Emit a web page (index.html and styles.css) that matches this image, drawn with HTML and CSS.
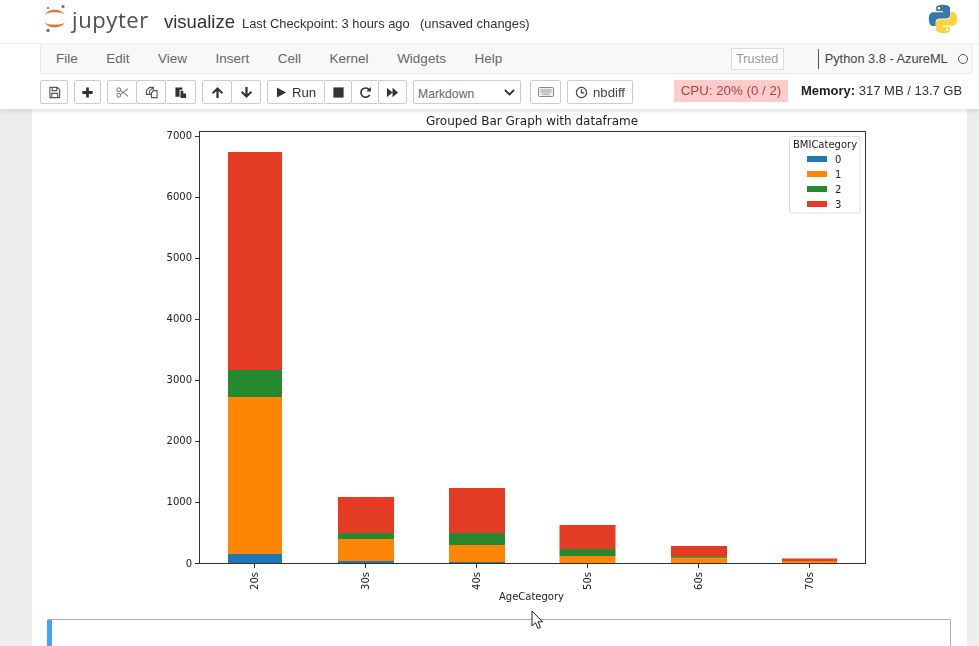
FILE: index.html
```html
<!DOCTYPE html>
<html lang="en">
<head>
<meta charset="utf-8">
<title>visualize</title>
<link rel="stylesheet" href="styles.css">
</head>
<body>
<header class="top">
  <div class="titlebar">
    <svg class="jlogo" width="24" height="30" viewBox="0 0 24 30">
      <path class="jorange" d="M2 11.500C5 5 18 5 22 11.500C18 8.500 5 8.500 2 11.500Z"/>
      <path class="jorange" d="M2 19.500C5 26 18 26 22 19.500C18 22.500 5 22.500 2 19.500Z"/>
      <circle class="jgrey" cx="20" cy="3.500" r="1.600"/>
      <circle class="jgrey" cx="5" cy="5" r="1.100"/>
      <circle class="jgrey" cx="5" cy="27.500" r="1.700"/>
    </svg>
    <span class="jname">jupyter</span>
    <span class="nbname">visualize</span>
    <span class="checkpoint">Last Checkpoint: 3 hours ago</span>
    <span class="unsaved">(unsaved changes)</span>
    <svg class="pylogo" width="30" height="30" viewBox="0 0 110 110">
      <path class="pyblue" d="M54 3C28 3 30 14 30 14V26H55V30H20C20 30 3 28 3 55C3 82 18 81 18 81H28V68C28 68 27 53 43 53H67C67 53 81 53 81 39V17C81 17 83 3 54 3ZM40 11A4.500 4.500 0 1 1 40 20A4.500 4.500 0 1 1 40 11Z"/>
      <path class="pyyellow" d="M56 107C82 107 80 96 80 96V84H55V80H90C90 80 107 82 107 55C107 28 92 29 92 29H82V42C82 42 83 57 67 57H43C43 57 29 57 29 71V93C29 93 27 107 56 107ZM70 99A4.500 4.500 0 1 1 70 90A4.500 4.500 0 1 1 70 99Z"/>
    </svg>
  </div>
  <nav class="menubar">
    <span class="menu m-file">File</span>
    <span class="menu">Edit</span>
    <span class="menu">View</span>
    <span class="menu">Insert</span>
    <span class="menu">Cell</span>
    <span class="menu">Kernel</span>
    <span class="menu">Widgets</span>
    <span class="menu">Help</span>
    <span class="trusted">Trusted</span>
    <span class="kernel">Python 3.8 - AzureML</span>
    <span class="kstatus"></span>
  </nav>
  <div class="toolbar">
    <div class="group"><button class="btn w28"><svg class="ico" viewBox="0 0 14 14"><path class="line" d="M2 1.500H10L12.500 4V12.500H2ZM4.500 1.500V5H9.500V1.500M4 12.500V8H10.500V12.500"/></svg></button></div>
    <div class="group"><button class="btn w27"><svg class="ico" viewBox="0 0 14 14"><path class="solid" d="M5.500 1.500H8.500V5.500H12.500V8.500H8.500V12.500H5.500V8.500H1.500V5.500H5.500Z"/></svg></button></div>
    <div class="group">
      <button class="btn w30"><svg class="ico" viewBox="0 0 14 14"><path class="faint" d="M5 5L13 11M5 9L13 3"/><circle class="faint" cx="3" cy="4" r="2"/><circle class="faint" cx="3" cy="10" r="2"/></svg></button>
      <button class="btn w30"><svg class="ico" viewBox="0 0 14 14"><path class="line" d="M5 1.500H9V5H13V12.500H7V9H1.500V5ZM9 1.500L5 5V9H7M9 5L7 7.500V9"/></svg></button>
      <button class="btn w31"><svg class="ico" viewBox="0 0 14 14"><path class="solid" d="M1.500 1.500H9V4H6V11.500H1.500Z"/><path class="solid" d="M7 5H10V8H13V13H7Z"/></svg></button>
    </div>
    <div class="group">
      <button class="btn w30"><svg class="ico" viewBox="0 0 14 14"><path class="solid" d="M7 1L13 7L11.500 8.500L8.200 5.300V13H5.800V5.300L2.500 8.500L1 7Z"/></svg></button>
      <button class="btn w30"><svg class="ico" viewBox="0 0 14 14"><path class="solid" d="M7 13L13 7L11.500 5.500L8.200 8.700V1H5.800V8.700L2.500 5.500L1 7Z"/></svg></button>
    </div>
    <div class="group">
      <button class="btn run"><svg class="ico small" viewBox="0 0 12 12"><path class="solid" d="M1 0.500L11 6L1 11.500Z"/></svg><span>Run</span></button>
      <button class="btn w28"><svg class="ico" viewBox="0 0 14 14"><rect class="solid" x="1.500" y="1.500" width="11" height="11"/></svg></button>
      <button class="btn w28"><svg class="ico" viewBox="0 0 14 14"><path class="arc" d="M11.500 9.500A5 5 0 1 1 11 4"/><path class="solid" d="M12.800 1.200V6H8Z"/></svg></button>
      <button class="btn w29"><svg class="ico" viewBox="0 0 14 14"><path class="solid" d="M1 2L7 7L1 12ZM7 2L13 7L7 12Z"/></svg></button>
    </div>
    <div class="select"><span>Markdown</span><svg class="chev" width="11" height="7" viewBox="0 0 11 7"><path class="chevline" d="M1 1L5.500 5.500L10 1"/></svg></div>
    <button class="btn kbd"><svg width="16" height="10" viewBox="0 0 16 10"><rect class="kbdrect" x="0.500" y="0.500" width="15" height="9" rx="1"/><path class="kbdkeys" d="M2.500 3H13.500M2.500 5H13.500M4.500 7.200H11.500"/></svg></button>
    <button class="btn nbdiff"><svg class="ico" viewBox="0 0 14 14"><circle class="arc" cx="7" cy="7" r="5.500"/><path class="arc" d="M7 3.500V7.500H10"/></svg><span>nbdiff</span></button>
    <div class="cpu">CPU: 20% (0 / 2)</div>
    <div class="memory"><b>Memory:</b> 317 MB / 13.7 GB</div>
  </div>
</header>
<main class="site">
  <div class="notebook">
    <svg class="chart" width="935" height="510" viewBox="32 109 935 510">
      <text class="title" x="532" y="125">Grouped Bar Graph with dataframe</text>
      <g class="red">
        <rect x="228" y="152" width="54" height="218"/><rect x="338" y="497" width="56" height="36"/><rect x="449" y="488" width="56" height="45"/><rect x="559.500" y="525" width="56" height="24"/><rect x="671" y="546" width="56" height="10"/><rect x="782" y="558.500" width="55" height="3"/>
      </g>
      <g class="green">
        <rect x="228" y="370" width="54" height="27"/><rect x="338" y="533" width="56" height="6"/><rect x="449" y="533" width="56" height="12"/><rect x="559.500" y="549" width="56" height="7"/><rect x="671" y="556" width="56" height="2.500" class="olive"/>
      </g>
      <g class="orange">
        <rect x="228" y="397" width="54" height="157"/><rect x="338" y="539" width="56" height="22"/><rect x="449" y="545" width="56" height="17"/><rect x="559.500" y="556" width="56" height="7"/><rect x="671" y="558.500" width="56" height="4.500"/><rect x="782" y="561" width="55" height="2"/>
      </g>
      <g class="blue">
        <rect x="228" y="554" width="54" height="9"/><rect x="338" y="561" width="56" height="2"/><rect x="449" y="562" width="56" height="1"/>
      </g>
      <rect class="axes" x="199.500" y="131.500" width="666" height="432"/>
      <path class="tick" d="M195 136.500H199M195 197.500H199M195 258.500H199M195 319.500H199M195 380.500H199M195 441.500H199M195 502.500H199M195 563.500H199M254.500 564V568M365.500 564V568M476.500 564V568M587.500 564V568M698.500 564V568M809.500 564V568"/>
      <g class="ylabel">
        <text x="192" y="139">7000</text><text x="192" y="200">6000</text><text x="192" y="261">5000</text><text x="192" y="322">4000</text><text x="192" y="383">3000</text><text x="192" y="444">2000</text><text x="192" y="505">1000</text><text x="192" y="566.500">0</text>
      </g>
      <g class="xlabel">
        <text transform="translate(257.500 581) rotate(-90)">20s</text>
        <text transform="translate(368.500 581) rotate(-90)">30s</text>
        <text transform="translate(479.500 581) rotate(-90)">40s</text>
        <text transform="translate(590.500 581) rotate(-90)">50s</text>
        <text transform="translate(701.500 581) rotate(-90)">60s</text>
        <text transform="translate(812.500 581) rotate(-90)">70s</text>
      </g>
      <text class="xname" x="531.500" y="599.500">AgeCategory</text>
      <rect class="legend" x="789.500" y="136.500" width="70.500" height="76.500" rx="2"/>
      <text class="legendtitle" x="825" y="147.500">BMICategory</text>
      <rect class="blue" x="807" y="156" width="20" height="6"/>
      <rect class="orange" x="807" y="171" width="20" height="6"/>
      <rect class="green" x="807" y="186" width="20" height="6"/>
      <rect class="red" x="807" y="201" width="20" height="6"/>
      <g class="legendlabel"><text x="835" y="162.500">0</text><text x="835" y="177.500">1</text><text x="835" y="192.500">2</text><text x="835" y="207.500">3</text></g>
    </svg>
    <div class="cell"></div>
  </div>
</main>
<svg class="cursor" width="13" height="20" viewBox="0 0 13 20"><path class="cursorpath" d="M1 1V16L4.500 12.800L7 18.500L9.500 17.300L7 11.800H11.500Z"/></svg>
</body>
</html>
```
FILE: styles.css
```css
* { box-sizing: border-box; }
html, body { margin: 0; height: 100%; overflow: hidden; }
body { background: #eee; font-family: "Liberation Sans", Arial, sans-serif; color: #333; position: relative; }

.top { background: #fff; height: 109px; box-shadow: 0 2px 5px rgba(0,0,0,.12); position: relative; z-index: 2; filter: blur(.3px); }
.titlebar { height: 44px; display: flex; align-items: baseline; position: relative; border-bottom: 1px solid #eee; padding-left: 72px; padding-top: 4px; }
.jlogo { position: absolute; left: 43px; top: 3px; }
.jorange { fill: #e0792f; }
.jgrey { fill: #6f7375; }
.jname { font: 22px "Open Sans", sans-serif; color: #4e4e4e; letter-spacing: 0.6px; width: 92px; }
.nbname { font-size: 18.500px; color: #333; width: 78px; }
.checkpoint { font-size: 12.900px; color: #333; width: 178px; }
.unsaved { font-size: 12.900px; color: #333; }
.pylogo { position: absolute; left: 928px; top: 4px; }
.pyblue { fill: #3a76a8; }
.pyyellow { fill: #fdd23e; }

.menubar { height: 30px; margin: 0 6px 0 40px; background: #f8f8f8; border: 1px solid #e9e9e9; border-top: 0; display: flex; align-items: center; gap: 29px; font-size: 13.500px; color: #666; border-radius: 0 0 2px 2px; white-space: nowrap; }
.menu { flex: none; margin-right: -0.500px; }
.m-file { margin-left: 15px; }
.trusted { flex: none; margin-left: 200px; width: 53px; height: 22px; line-height: 20px; text-align: center; border: 1px solid #ddd; background: #fff; color: #999; font-size: 12.500px; }
.kernel { flex: none; margin-left: 5px; padding-left: 6px; border-left: 1px solid #555; font-size: 12.800px; height: 20px; line-height: 20px; color: #444; width: 138px; }
.kstatus { flex: none; width: 10px; height: 10px; border: 1.500px solid #555; border-radius: 50%; margin-left: -27px; }

.toolbar { display: flex; align-items: flex-start; height: 35px; padding: 6px 0 0 40px; }
.group { display: flex; margin-right: 6px; }
.btn { height: 24px; background: #fff; border: 1px solid #ccc; border-radius: 2px; padding: 0; display: flex; align-items: center; justify-content: center; color: #333; font: 13.200px "Liberation Sans", sans-serif; }
.group .btn + .btn { margin-left: -1px; }
.w27 { width: 27px; } .w28 { width: 28px; } .w29 { width: 29px; } .w30 { width: 30px; } .w31 { width: 31px; }
.run { width: 58px; gap: 5px; }
.ico { width: 13px; height: 13px; display: block; }
.ico.small { width: 11px; height: 11px; }
.line { fill: none; stroke: #555; stroke-width: 1.200; }
.faint { fill: none; stroke: #888; stroke-width: 1.200; }
.solid { fill: #333; }
.arc { fill: none; stroke: #333; stroke-width: 1.800; }
.select { width: 108px; height: 24px; margin-right: 9px; border: 1px solid #ccc; border-radius: 2px; background: #fff; display: flex; align-items: center; justify-content: space-between; padding: 3px 5px 0 4px; font-size: 12.200px; color: #666; }
.chev { margin-top: -3px; }
.chevline { fill: none; stroke: #333; stroke-width: 1.800; }
.kbd { width: 31px; margin-right: 6px; }
.kbdrect { fill: #eee; stroke: #888; }
.kbdkeys { stroke: #999; stroke-width: 1; }
.nbdiff { width: 66px; gap: 5px; color: #444; }
.nbdiff .arc { stroke: #444; stroke-width: 1.300; }
.cpu { margin-left: 41px; width: 114px; height: 22px; line-height: 21px; text-align: center; background: #fcc; color: #a94442; font-size: 13.300px; }
.memory { margin-left: 13px; font-size: 13px; line-height: 21px; color: #333; white-space: nowrap; }
.memory b { color: #222; }

.site { height: 537px; overflow: hidden; }
.notebook { margin-left: 32px; width: 935px; height: 537px; background: #fff; }
.chart { display: block; filter: blur(.3px); }
.chart text { font-family: "DejaVu Sans", sans-serif; fill: #222; }
.title { font-size: 12px; text-anchor: middle; }
.red { fill: #e33b24; }
.green { fill: #24892f; }
.olive { fill: #7f7a1e; }
.orange { fill: #ff8507; }
.blue { fill: #1f77b4; }
.axes { fill: none; stroke: #333; stroke-width: 1; }
.tick { stroke: #333; stroke-width: 1; fill: none; }
.chart .ylabel text { font-size: 10px; text-anchor: end; }
.chart .xlabel text { font-size: 10px; text-anchor: middle; }
.chart .xname { font-size: 10px; text-anchor: middle; }
.legend { fill: #fff; stroke: #ddd; }
.chart .legendtitle { font-size: 10px; text-anchor: middle; }
.chart .legendlabel text { font-size: 10px; }

.cell { margin: 0 16px 0 15px; height: 40px; border: 1px solid #ababab; border-bottom: 0; border-radius: 2px 2px 0 0; border-left: 5px solid #42a5f5; }

.cursor { position: absolute; left: 531px; top: 610px; z-index: 3; }
.cursorpath { fill: #fff; stroke: #222; stroke-width: 1; }
```
